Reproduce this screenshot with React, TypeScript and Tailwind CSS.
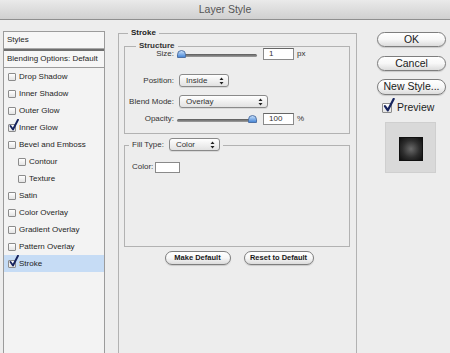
const font = { fontFamily: '"Liberation Sans", Arial, sans-serif' };

export default function App() {
  return (
    <div style={font} className="w-[450px] h-[353px] overflow-hidden bg-[#ededed] text-[#1e1e1e]">
      {/* title bar */}
      <div className="h-[20px] flex items-center justify-center bg-gradient-to-b from-[#eaeaea] to-[#d0d0d0] border-b border-[#8f8f8f]">
        <span className="text-[10.5px] text-[#555]">Layer Style</span>
      </div>

      <div className="flex h-[333px]">
        <StylesList />
        <StrokePanel />
        <ActionColumn />
      </div>
    </div>
  );
}

function StylesList() {
  const items: { label: string; checked?: boolean; indent?: boolean; active?: boolean }[] = [
    { label: "Drop Shadow" },
    { label: "Inner Shadow" },
    { label: "Outer Glow" },
    { label: "Inner Glow", checked: true },
    { label: "Bevel and Emboss" },
    { label: "Contour", indent: true },
    { label: "Texture", indent: true },
    { label: "Satin" },
    { label: "Color Overlay" },
    { label: "Gradient Overlay" },
    { label: "Pattern Overlay" },
    { label: "Stroke", checked: true, active: true },
  ];

  return (
    <div className="ml-[3px] mt-[11px] w-[102px] h-[330px] shrink-0 flex flex-col border-x border-t border-[#9b9b9b] bg-[#f3f3f3] text-[8px]">
      <div className="h-[16px] flex items-center pl-[3px] bg-[#f6f6f6]">Styles</div>
      <div className="h-px bg-[#a8a8a8]" />
      <div className="h-[2px] bg-[#6f6f6f]" />
      <div className="h-[17px] flex items-center pl-[3px] bg-[#f6f6f6] border-b border-[#9b9b9b]">Blending Options: Default</div>
      {items.map((it) => (
        <div
          key={it.label}
          className={`h-[17px] flex items-center gap-[3px] ${it.indent ? "pl-[14px]" : "pl-[4px]"} ${it.active ? "bg-[#c6dcf5]" : ""}`}
        >
          <Check checked={it.checked} size={8} />
          <span>{it.label}</span>
        </div>
      ))}
    </div>
  );
}

function Check({ checked, size }: { checked?: boolean; size: number }) {
  return (
    <span
      className="relative shrink-0 rounded-[1px] border border-[#8c8c8c] bg-gradient-to-b from-white to-[#e4e4e4]"
      style={{ width: size, height: size }}
    >
      {checked && (
        <svg className="absolute left-[0px] bottom-[0px]" width={size + 2} height={size + 4} viewBox="0 0 10 12">
          <path d="M1.5 7 L4 10.5 L9 0.8" fill="none" stroke="#16235e" strokeWidth="1.9" strokeLinecap="round" strokeLinejoin="round" />
        </svg>
      )}
    </span>
  );
}

function Select({ value, width }: { value: string; width: number }) {
  return (
    <div
      className="h-[13px] flex items-center justify-between pl-[6px] pr-[4px] rounded-[3px] border border-[#8a8a8a] bg-gradient-to-b from-white to-[#e2e2e2] text-[8px] shadow-[0_1px_0_#d8d8d8]"
      style={{ width }}
    >
      <span>{value}</span>
      <svg width="5" height="8" viewBox="0 0 5 8">
        <path d="M2.5 0.5 L4.5 3 L0.5 3 Z M2.5 7.5 L4.5 5 L0.5 5 Z" fill="#222" />
      </svg>
    </div>
  );
}

function Slider({ pos }: { pos: "start" | "end" }) {
  return (
    <div className={`w-[80px] h-[9px] flex items-center ${pos === "end" ? "justify-end" : "justify-start"} relative`}>
      <div className="absolute left-0 right-0 top-[4px] h-[3px] rounded-full bg-gradient-to-b from-[#5a5a5a] to-[#a0a0a0]" />
      <div className="relative w-[9px] h-[8px] rounded-t-full rounded-b-[2px] border border-[#4f72a6] bg-gradient-to-b from-[#c4defa] to-[#4a88d6]" />
    </div>
  );
}

function Field({ value }: { value: string }) {
  return (
    <div className="w-[31px] h-[12px] flex items-center pl-[5px] border border-[#8a8a8a] border-t-[#666] bg-white text-[8px]">
      {value}
    </div>
  );
}

function BoxLabel({ children, left }: { children: React.ReactNode; left: string }) {
  return (
    <div className={`absolute top-[-5px] ${left} px-[3px] bg-[#ededed] text-[8px] font-bold leading-[8px]`}>{children}</div>
  );
}

function StrokePanel() {
  return (
    <div className="ml-[13px] mt-[13px] w-[239px] h-[330px] shrink-0 relative border-x border-t border-[#b2b2b2]">
      <BoxLabel left="left-[9px]">Stroke</BoxLabel>

      {/* Structure */}
      <div className="relative ml-[5px] mt-[12px] w-[226px] h-[88px] border border-[#b2b2b2] text-[8px] text-[#333]">
        <BoxLabel left="left-[11px]">Structure</BoxLabel>

        <div className="flex items-center h-[12px] mt-[1px]">
          <span className="w-[49px] text-right leading-[8px]">Size:</span>
          <div className="ml-[3px]"><Slider pos="start" /></div>
          <div className="ml-[6px]"><Field value="1" /></div>
          <span className="ml-[3px]">px</span>
        </div>

        <div className="flex items-center h-[13px] mt-[14px]">
          <span className="w-[49px] text-right">Position:</span>
          <div className="ml-[5px]"><Select value="Inside" width={50} /></div>
        </div>

        <div className="flex items-center h-[13px] mt-[8px]">
          <span className="w-[49px] text-right">Blend Mode:</span>
          <div className="ml-[5px]"><Select value="Overlay" width={89} /></div>
        </div>

        <div className="flex items-center h-[12px] mt-[5px]">
          <span className="w-[49px] text-right">Opacity:</span>
          <div className="ml-[3px]"><Slider pos="end" /></div>
          <div className="ml-[6px]"><Field value="100" /></div>
          <span className="ml-[3px]">%</span>
        </div>
      </div>

      {/* Fill type */}
      <div className="relative ml-[5px] mt-[11px] w-[226px] h-[102px] border border-[#b2b2b2] text-[8px] text-[#333]">
        <div className="absolute top-[-8px] left-[4px] px-[3px] flex items-center gap-[5px] bg-[#ededed]">
          <span>Fill Type:</span>
          <Select value="Color" width={51} />
        </div>
        <div className="flex items-center pt-[15px] pl-[7px]">
          <span>Color:</span>
          <div className="ml-[2px] w-[25px] h-[11px] border border-[#8a8a8a] bg-white" />
        </div>
      </div>

      <div className="mt-[4px] flex justify-center gap-[13px] pl-[3px]">
        <PillButton className="w-[66px] h-[14px] text-[7.5px] font-bold">Make Default</PillButton>
        <PillButton className="w-[70px] h-[14px] text-[7.5px] font-bold">Reset to Default</PillButton>
      </div>
    </div>
  );
}

function PillButton({ children, className }: { children: React.ReactNode; className: string }) {
  return (
    <div
      className={`flex items-center justify-center rounded-full border border-[#7e7e7e] bg-gradient-to-b from-white via-[#f7f7f7] to-[#dcdcdc] text-[#1a1a1a] shadow-[0_1px_1px_rgba(0,0,0,0.15)] ${className}`}
    >
      {children}
    </div>
  );
}

function ActionColumn() {
  return (
    <div className="ml-[20px] mt-[12px] w-[69px] shrink-0 flex flex-col">
      <PillButton className="h-[15px] text-[10.5px]">OK</PillButton>
      <PillButton className="h-[15px] mt-[9px] text-[10.5px]">Cancel</PillButton>
      <PillButton className="h-[16px] mt-[8px] text-[10.5px]">New Style...</PillButton>

      <div className="flex items-center mt-[7px] ml-[5px] h-[11px]">
        <Check checked size={10} />
        <span className="ml-[5px] text-[10.5px]">Preview</span>
      </div>

      <div className="mt-[9px] ml-[8px] w-[51px] h-[51px] flex items-center justify-center bg-[#d9d9d9] border border-[#cfcfcf]">
        <div className="w-[24px] h-[24px] mt-[2px] border border-[#111] bg-[radial-gradient(circle,#6a6a6a_0%,#2e2e2e_55%,#0f0f0f_100%)]" />
      </div>
    </div>
  );
}
